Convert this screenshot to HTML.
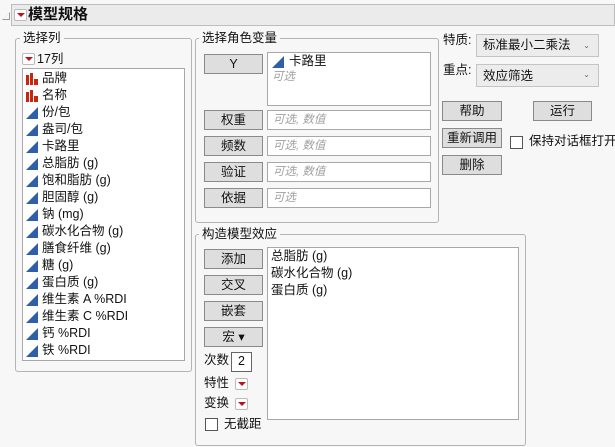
<!DOCTYPE html>
<html><head><meta charset="utf-8"><style>
*{box-sizing:border-box;margin:0;padding:0}
body{width:615px;height:447px;background:#f7f7f7;position:relative;overflow:hidden;font-family:"Liberation Sans","Noto Sans CJK SC",sans-serif;font-size:12.5px;color:#111}
.a{position:absolute;white-space:nowrap}
.grp{position:absolute;border:1px solid #b4b4b4;border-radius:3px}
.lg{position:absolute;background:#f7f7f7;padding:0 3px;font-size:12.5px;line-height:14px}
.btn{position:absolute;background:#dedede;border:1px solid #8a8a8a;text-align:center;font-size:12.5px;line-height:18px;white-space:nowrap}
.box{position:absolute;background:#fff;border:1px solid #a8a8a8}
.ph{color:#a0a0a0;font-style:italic;font-size:11.5px}
.tri{display:inline-block;width:0;height:0;border-left:12px solid transparent;border-bottom:12px solid #2f5fa8;position:absolute}
.bar{position:absolute;width:12px;height:12px}
.bar i{position:absolute;bottom:0;background:#c8260e;width:3px}
.rd{position:absolute;width:13px;height:12px;border:1px solid #bbb;border-radius:2px;background:#fff}
.rd:after{content:"";position:absolute;left:2px;top:3px;border-left:4px solid transparent;border-right:4px solid transparent;border-top:4px solid #c0101a}
.item{position:absolute;left:42px;line-height:17px;font-size:12.5px;white-space:nowrap}
.cb{position:absolute;width:13px;height:13px;border:1px solid #555;background:#fff}
</style></head><body>
<!-- header -->
<div class="a" style="left:2px;top:12px;width:0;height:0;border-left:8px solid transparent;border-bottom:8px solid #999"></div>
<div class="a" style="left:3px;top:13px;width:0;height:0;border-left:6px solid transparent;border-bottom:6px solid #f7f7f7"></div>
<div class="a" style="left:11px;top:4px;width:604px;height:22px;background:#ebebeb;border:1px solid #bdbdbd"></div>
<div class="rd" style="left:14px;top:9px"></div>
<div class="a" style="left:28px;top:4px;font-size:15px;font-weight:bold;line-height:21px">模型规格</div>

<!-- left group -->
<div class="grp" style="left:15px;top:38px;width:177px;height:334px"></div>
<div class="lg" style="left:20px;top:31px">选择列</div>
<div class="rd" style="left:22px;top:53px"></div>
<div class="a" style="left:37px;top:51px;line-height:16px">17列</div>
<div class="box" style="left:22px;top:68px;width:163px;height:293px"></div>
<div id="list"></div>

<!-- middle group -->
<div class="grp" style="left:195px;top:38px;width:244px;height:185px"></div>
<div class="lg" style="left:199px;top:31px">选择角色变量</div>
<div class="btn" style="left:204px;top:54px;width:59px;height:20px">Y</div>
<div class="box" style="left:267px;top:52px;width:164px;height:54px"></div>
<span class="tri" style="left:272px;top:56px"></span>
<div class="a" style="left:289px;top:53px;line-height:17px">卡路里</div>
<div class="a ph" style="left:272px;top:69px;line-height:16px">可选</div>

<div class="btn" style="left:204px;top:110px;width:59px;height:20px">权重</div>
<div class="box ph" style="left:267px;top:110px;width:164px;height:20px;padding-left:5px;line-height:18px">可选, 数值</div>
<div class="btn" style="left:204px;top:136px;width:59px;height:20px">频数</div>
<div class="box ph" style="left:267px;top:136px;width:164px;height:20px;padding-left:5px;line-height:18px">可选, 数值</div>
<div class="btn" style="left:204px;top:162px;width:59px;height:20px">验证</div>
<div class="box ph" style="left:267px;top:162px;width:164px;height:20px;padding-left:5px;line-height:18px">可选, 数值</div>
<div class="btn" style="left:204px;top:188px;width:59px;height:20px">依据</div>
<div class="box ph" style="left:267px;top:188px;width:164px;height:20px;padding-left:5px;line-height:18px">可选</div>

<!-- bottom group -->
<div class="grp" style="left:195px;top:234px;width:331px;height:212px"></div>
<div class="lg" style="left:199px;top:227px">构造模型效应</div>
<div class="btn" style="left:204px;top:249px;width:59px;height:20px">添加</div>
<div class="btn" style="left:204px;top:275px;width:59px;height:20px">交叉</div>
<div class="btn" style="left:204px;top:301px;width:59px;height:20px">嵌套</div>
<div class="btn" style="left:204px;top:327px;width:59px;height:20px">宏 ▾</div>
<div class="box" style="left:267px;top:247px;width:252px;height:173px"></div>
<div class="a" style="left:271px;top:248px;line-height:17px">总脂肪 (g)<br>碳水化合物 (g)<br>蛋白质 (g)</div>
<div class="a" style="left:204px;top:352px;line-height:16px">次数</div>
<div class="box" style="left:231px;top:352px;width:21px;height:20px;border-color:#666;text-align:center;line-height:16px">2</div>
<div class="a" style="left:204px;top:375px;line-height:16px">特性</div>
<div class="rd" style="left:235px;top:378px"></div>
<div class="a" style="left:204px;top:395px;line-height:16px">变换</div>
<div class="rd" style="left:235px;top:398px"></div>
<div class="cb" style="left:205px;top:418px"></div>
<div class="a" style="left:224px;top:416px;line-height:16px">无截距</div>

<!-- right -->
<div class="a" style="left:443px;top:32px;line-height:16px">特质:</div>
<div class="a" style="left:476px;top:34px;width:123px;height:23px;background:#ececec;border:1px solid #c4c4c4;padding-left:6px;line-height:21px">标准最小二乘法<span style="position:absolute;right:8px;font-size:8px;color:#666">⌄</span></div>
<div class="a" style="left:443px;top:62px;line-height:16px">重点:</div>
<div class="a" style="left:476px;top:64px;width:123px;height:23px;background:#ececec;border:1px solid #c4c4c4;padding-left:6px;line-height:23px">效应筛选<span style="position:absolute;right:8px;font-size:8px;color:#666;line-height:19px">⌄</span></div>
<div class="btn" style="left:442px;top:101px;width:60px;height:20px">帮助</div>
<div class="btn" style="left:533px;top:101px;width:59px;height:20px">运行</div>
<div class="btn" style="left:442px;top:128px;width:60px;height:20px">重新调用</div>
<div class="cb" style="left:510px;top:136px"></div>
<div class="a" style="left:529px;top:133px;line-height:16px">保持对话框打开</div>
<div class="btn" style="left:442px;top:155px;width:60px;height:20px">删除</div>

<script>
var items=[["b","品牌"],["b","名称"],["t","份/包"],["t","盎司/包"],["t","卡路里"],["t","总脂肪 (g)"],["t","饱和脂肪 (g)"],["t","胆固醇 (g)"],["t","钠 (mg)"],["t","碳水化合物 (g)"],["t","膳食纤维 (g)"],["t","糖 (g)"],["t","蛋白质 (g)"],["t","维生素 A %RDI"],["t","维生素 C %RDI"],["t","钙 %RDI"],["t","铁 %RDI"]];
var h="";
items.forEach(function(it,i){var y=71+17*i;
if(it[0]=="b"){h+='<div class="bar" style="left:26px;top:'+(y+2)+'px"><i style="left:0;height:10px"></i><i style="left:4px;height:12px"></i><i style="left:8px;height:6px;width:4px"></i></div>';}
else{h+='<span class="tri" style="left:26px;top:'+(y+2)+'px"></span>';}
h+='<div class="item" style="top:'+(y-1)+'px">'+it[1]+'</div>';});
document.getElementById("list").innerHTML=h;
</script>
</body></html>
